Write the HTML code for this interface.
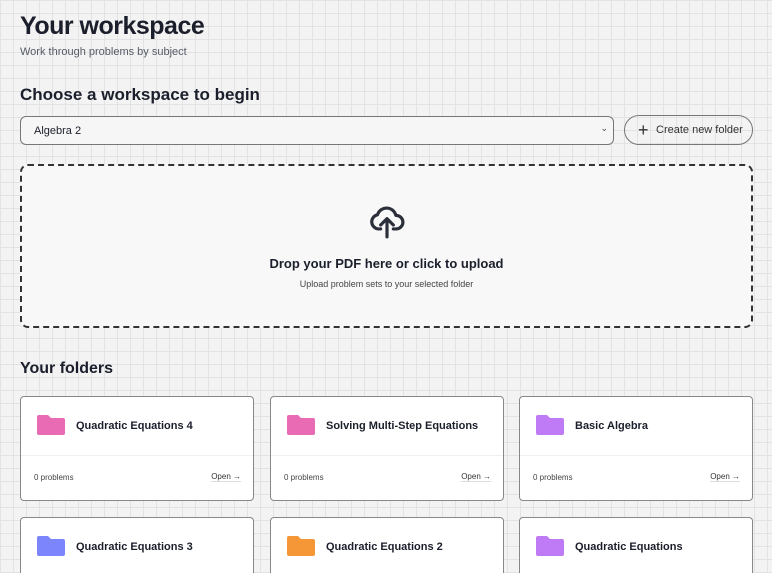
<!DOCTYPE html>
<html><head><style>
*{box-sizing:border-box;margin:0;padding:0}
html,body{width:772px;height:573px;overflow:hidden}
body{font-family:"Liberation Sans",sans-serif;color:#1b1e2b;
background-color:#f3f3f3;background-image:linear-gradient(#e3e3e3 1px,transparent 1px),linear-gradient(90deg,#e3e3e3 1px,transparent 1px);background-size:13px 13px;position:relative}
.abs{position:absolute}
h1{position:absolute;left:20px;top:12px;font-size:25px;font-weight:700;letter-spacing:-0.5px}
.sub{left:20px;top:46px;font-size:11px;color:#555a66}
h2{position:absolute;left:20px;top:85px;font-size:17px;font-weight:700}
.sel{left:20px;top:116px;width:594px;height:29px;border:1px solid #777;border-radius:6px;background:#f6f6f6;font-size:11px;padding:8px 13px}
.sel span{position:absolute;right:5px;top:6px;font-size:9px;color:#444}
.btn{left:624px;top:115px;width:129px;height:30px;border:1px solid #777;border-radius:15px;font-size:11px;color:#333;padding:8px 0 0 31px}
.btn b{position:absolute;left:13px;top:4px;font-size:18px;font-weight:300}
.drop{left:20px;top:164px;width:733px;height:164px;border:2px dashed #333;border-radius:8px;background:#f8f8f8;text-align:center}
.drop .t{position:absolute;left:0;right:0;top:90px;font-size:13px;font-weight:700}
.drop .s{position:absolute;left:0;right:0;top:113px;font-size:9px;color:#444}
h3{position:absolute;left:20px;top:360px;font-size:16px;font-weight:700}
.card{position:absolute;width:234px;height:105px;border:1px solid #888;border-radius:4px;background:#fff}
.card.r2{height:56px;border-bottom:none;border-radius:4px 4px 0 0}
.card .n{position:absolute;left:55px;top:23px;font-size:11px;font-weight:700}
.card svg{position:absolute;left:16px;top:18px}
.card .hr{position:absolute;left:0;right:0;top:58px;border-top:1px solid #f0f0f0}
.card .p{position:absolute;left:13px;top:76px;font-size:8px;color:#444}
.card .o{position:absolute;right:12px;top:75px;font-size:8px;color:#333;border-bottom:1px solid #ddd}
</style></head><body>
<h1>Your workspace</h1>
<div class="abs sub">Work through problems by subject</div>
<h2>Choose a workspace to begin</h2>
<div class="abs sel">Algebra 2<span>⌄</span></div>
<div class="abs btn"><b>+</b>Create new folder</div>
<div class="abs drop">
<svg class="abs" style="left:346px;top:35px" width="38" height="40" viewBox="0 0 24 24" fill="none" stroke="#2b2f3a" stroke-width="2" stroke-linecap="round" stroke-linejoin="round"><path d="M8 17H6.5A4.5 4.5 0 0 1 6 8.1 6 6 0 0 1 17.6 8.5 4 4 0 0 1 18 17h-2"/><path d="M12 22V11M8 14.5l4-4 4 4"/></svg>
<div class="t">Drop your PDF here or click to upload</div>
<div class="s">Upload problem sets to your selected folder</div>
</div>
<h3>Your folders</h3>
<div class="card" style="left:20px;top:396px"><svg width="28" height="20" viewBox="0 0 28 20"><path d="M2 0h9l3 3h12a2 2 0 0 1 2 2v13a2 2 0 0 1-2 2H2a2 2 0 0 1-2-2V2a2 2 0 0 1 2-2z" fill="#e86bb4"/></svg><div class="n">Quadratic Equations 4</div><div class="hr"></div><div class="p">0 problems</div><div class="o">Open →</div></div>
<div class="card" style="left:270px;top:396px"><svg width="28" height="20" viewBox="0 0 28 20"><path d="M2 0h9l3 3h12a2 2 0 0 1 2 2v13a2 2 0 0 1-2 2H2a2 2 0 0 1-2-2V2a2 2 0 0 1 2-2z" fill="#e86bb4"/></svg><div class="n">Solving Multi-Step Equations</div><div class="hr"></div><div class="p">0 problems</div><div class="o">Open →</div></div>
<div class="card" style="left:519px;top:396px"><svg width="28" height="20" viewBox="0 0 28 20"><path d="M2 0h9l3 3h12a2 2 0 0 1 2 2v13a2 2 0 0 1-2 2H2a2 2 0 0 1-2-2V2a2 2 0 0 1 2-2z" fill="#be7bf5"/></svg><div class="n">Basic Algebra</div><div class="hr"></div><div class="p">0 problems</div><div class="o">Open →</div></div>
<div class="card r2" style="left:20px;top:517px"><svg width="28" height="20" viewBox="0 0 28 20"><path d="M2 0h9l3 3h12a2 2 0 0 1 2 2v13a2 2 0 0 1-2 2H2a2 2 0 0 1-2-2V2a2 2 0 0 1 2-2z" fill="#7c85fb"/></svg><div class="n">Quadratic Equations 3</div></div>
<div class="card r2" style="left:270px;top:517px"><svg width="28" height="20" viewBox="0 0 28 20"><path d="M2 0h9l3 3h12a2 2 0 0 1 2 2v13a2 2 0 0 1-2 2H2a2 2 0 0 1-2-2V2a2 2 0 0 1 2-2z" fill="#f59637"/></svg><div class="n">Quadratic Equations 2</div></div>
<div class="card r2" style="left:519px;top:517px"><svg width="28" height="20" viewBox="0 0 28 20"><path d="M2 0h9l3 3h12a2 2 0 0 1 2 2v13a2 2 0 0 1-2 2H2a2 2 0 0 1-2-2V2a2 2 0 0 1 2-2z" fill="#be7bf5"/></svg><div class="n">Quadratic Equations</div></div>
</body></html>
